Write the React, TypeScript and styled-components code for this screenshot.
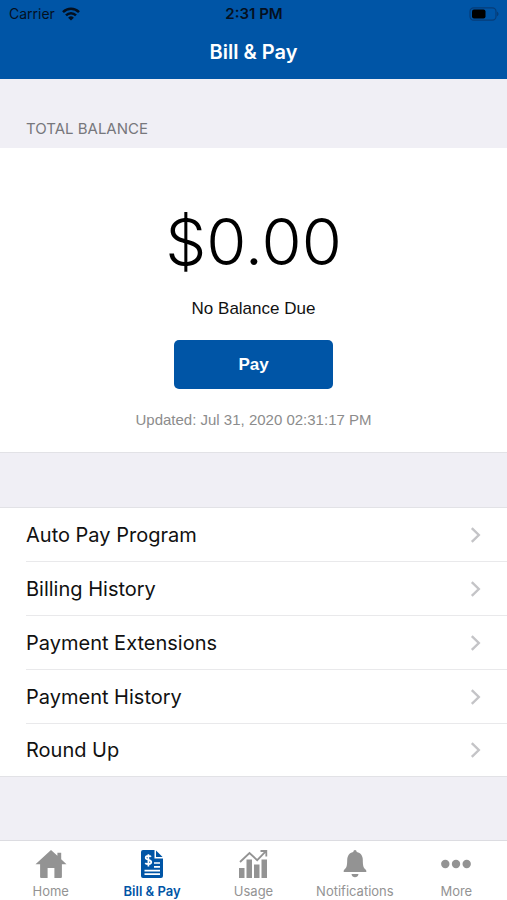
import React from "react";
import styled, { createGlobalStyle } from "styled-components";

const blue = "#0055a6";
const line = "#e2e2e6";
const sans = `Inter, "Liberation Sans", sans-serif`;
const helvetica = `"Liberation Sans", Arial, sans-serif`;

const GlobalStyle = createGlobalStyle`
  *, *::before, *::after { box-sizing: border-box; }
  body { margin: 0; font-family: ${sans}; color: #111; background: #f0eff5; }
  button { font: inherit; color: inherit; border: 0; padding: 0; cursor: pointer; }
  h1, h2, p, ul { margin: 0; padding: 0; font-weight: 400; }
  svg { display: block; }
`;

const Screen = styled.div`
  display: flex;
  flex-direction: column;
  min-height: 100vh;
`;

const Header = styled.header`
  background: ${blue};
  height: 79px;
`;

const StatusBar = styled.div`
  display: grid;
  grid-template-columns: 1fr auto 1fr;
  align-items: center;
  height: 27px;
  padding: 0 8px 0 9px;
  font-size: 14px;
  line-height: 16px;
  color: #04101f;
`;

const Carrier = styled.div`
  display: flex;
  align-items: center;
  gap: 7px;
`;

const Clock = styled.time`
  font-size: 15px;
  font-weight: 600;
`;

const BatterySlot = styled.div`
  display: flex;
  justify-content: flex-end;
`;

const Title = styled.h1`
  color: #fff;
  font-size: 20px;
  line-height: 50px;
  font-weight: 600;
  text-align: center;
`;

const Main = styled.main`
  flex: 1;
`;

const SectionTitle = styled.h2`
  padding: 40px 26px 9px;
  font-size: 15px;
  line-height: 20px;
  color: #77777c;
`;

const Balance = styled.section`
  display: flex;
  flex-direction: column;
  align-items: center;
  background: #fff;
  border-bottom: 1px solid ${line};
  padding: 52px 16px 22px;
`;

const Amount = styled.p`
  font-size: 65px;
  line-height: 84px;
  font-weight: 300;
  color: #000;
`;

const Due = styled.p`
  margin-top: 14px;
  font: 17px/22px ${helvetica};
  color: #111;
`;

const PayButton = styled.button`
  && {
    margin-top: 20px;
    width: 159px;
    height: 49px;
    border-radius: 5px;
    background: ${blue};
    color: #fff;
    font: 700 17px/24px ${helvetica};
  }
`;

const Updated = styled.p`
  margin-top: 21px;
  font: 15px/20px ${helvetica};
  color: #8c8c8c;
`;

const Menu = styled.ul`
  margin-top: 54px;
  list-style: none;
  background: #fff;
  border-top: 1px solid ${line};
  border-bottom: 1px solid ${line};
`;

const MenuItem = styled.li`
  padding-left: 26px;
`;

const MenuButton = styled.button<{ $last: boolean }>`
  && {
    display: flex;
    align-items: center;
    justify-content: space-between;
    width: 100%;
    height: ${(p) => (p.$last ? 52 : 54)}px;
    padding-right: 26px;
    background: none;
    border-bottom: ${(p) => (p.$last ? "0" : "1px solid #e9e9eb")};
    font-size: 20px;
    line-height: 26px;
  }
`;

const TabBar = styled.nav`
  display: grid;
  grid-template-columns: repeat(5, 1fr);
  height: 60px;
  background: #fff;
  border-top: 1px solid #dcdce1;
`;

const Tab = styled.button<{ $active: boolean }>`
  && {
    display: flex;
    flex-direction: column;
    align-items: center;
    gap: 3px;
    padding-top: 7px;
    background: none;
    color: ${(p) => (p.$active ? blue : "#939393")};
    font-size: 13px;
    line-height: 16px;
    font-weight: ${(p) => (p.$active ? 600 : 400)};
  }
`;

const WifiIcon = () => (
  <svg width="18" height="14" viewBox="0 0 18 14" fill="none" stroke="currentColor" strokeWidth="2.5" aria-hidden="true">
    <path d="M1 5.2C5.5.7 12.5.7 17 5.2" />
    <path d="M4 8.4c2.9-2.9 7.1-2.9 10 0" />
    <path d="M9 13.6 6.1 10.7a4.1 4.1 0 0 1 5.8 0z" fill="currentColor" stroke="none" />
  </svg>
);

const BatteryIcon = () => (
  <svg width="30" height="14" viewBox="0 0 30 14" aria-hidden="true">
    <rect x="1" y=".8" width="26" height="12.4" rx="3.6" fill="none" stroke="#063d78" strokeWidth="1.2" />
    <rect x="3" y="2.6" width="13.5" height="8.8" rx="2" fill="#000" />
    <path d="M28 4.8c2 .7 2 3.7 0 4.4z" fill="#063d78" />
  </svg>
);

const Chevron = () => (
  <svg width="11" height="16" viewBox="0 0 11 16" fill="none" stroke="#c4c4c7" strokeWidth="2.4" aria-hidden="true">
    <path d="m1.8 1.2 7 6.8-7 6.8" />
  </svg>
);

const HomeIcon = () => (
  <svg width="32" height="32" viewBox="0 0 32 32" fill="currentColor" aria-hidden="true">
    <path d="M16 2 .5 16.3h4.6V29q0 1 1 1h6.5V20h6.8v10h6.5q1 0 1-1V16.3h4.6l-5.3-5V4.8h-3.8v3z" />
  </svg>
);

const BillIcon = () => (
  <svg width="32" height="32" viewBox="0 0 32 32" aria-hidden="true">
    <path d="M7 2h11.5v8.5H27V28q0 2-2 2H7q-2 0-2-2V4q0-2 2-2z" fill="currentColor" />
    <path d="M20 2.5 26.6 9H20z" fill="currentColor" />
    <g fill="none" stroke="#fff" strokeWidth="1.7">
      <path d="M15 8.8c-1-1.2-5.3-1.5-5.3 1 0 2.6 5.6 1.5 5.6 4.3 0 2.7-4.7 2.5-6.1 1M12.4 6.2v12.2" />
      <path d="M18 15h6M18 18.8h6M8.5 22.6H24M8.5 26.2H24" />
    </g>
  </svg>
);

const UsageIcon = () => (
  <svg width="32" height="32" viewBox="0 0 32 32" fill="currentColor" aria-hidden="true">
    <path d="M2 20h5.5v10H2zM9.5 11.5H15V30H9.5zM17 16.5h5.5V30H17zM24.5 11.5H30V30h-5.5z" />
    <path d="m3 14 9.5-9 7.7 7.2 8-8.3M23.5 3h5.8v5.6" fill="none" stroke="currentColor" strokeWidth="1.8" />
  </svg>
);

const BellIcon = () => (
  <svg width="32" height="32" viewBox="0 0 32 32" fill="currentColor" aria-hidden="true">
    <path d="M16 2q1.5 0 1.8 2c4 .8 6 4 6 8 0 6 .7 8 3 9.8q.8.7.5 2.2H4.7q-.3-1.5.5-2.2c2.3-1.8 3-3.8 3-9.8 0-4 2-7.2 6-8Q14.5 2 16 2zM12.500 26h7c-.5 4.3-6.5 4.3-7 0z" />
  </svg>
);

const MoreIcon = () => (
  <svg width="32" height="32" viewBox="0 0 32 32" fill="currentColor" aria-hidden="true">
    <circle cx="5.3" cy="16" r="4.2" />
    <circle cx="16" cy="16" r="4.2" />
    <circle cx="26.7" cy="16" r="4.2" />
  </svg>
);

const menuItems = ["Auto Pay Program", "Billing History", "Payment Extensions", "Payment History", "Round Up"];

const tabs = [
  { label: "Home", Icon: HomeIcon },
  { label: "Bill & Pay", Icon: BillIcon },
  { label: "Usage", Icon: UsageIcon },
  { label: "Notifications", Icon: BellIcon },
  { label: "More", Icon: MoreIcon },
];

export default function App() {
  return (
    <>
      <GlobalStyle />
      <Screen>
        <Header>
          <StatusBar>
            <Carrier>
              Carrier
              <WifiIcon />
            </Carrier>
            <Clock>2:31 PM</Clock>
            <BatterySlot>
              <BatteryIcon />
            </BatterySlot>
          </StatusBar>
          <Title>Bill &amp; Pay</Title>
        </Header>
        <Main>
          <SectionTitle>TOTAL BALANCE</SectionTitle>
          <Balance>
            <Amount>$0.00</Amount>
            <Due>No Balance Due</Due>
            <PayButton type="button">Pay</PayButton>
            <Updated>Updated: Jul 31, 2020 02:31:17 PM</Updated>
          </Balance>
          <Menu>
            {menuItems.map((label, i) => (
              <MenuItem key={label}>
                <MenuButton type="button" $last={i === menuItems.length - 1}>
                  {label}
                  <Chevron />
                </MenuButton>
              </MenuItem>
            ))}
          </Menu>
        </Main>
        <TabBar aria-label="Main">
          {tabs.map(({ label, Icon }) => {
            const active = label === "Bill & Pay";
            return (
              <Tab key={label} type="button" $active={active} aria-current={active ? "page" : undefined}>
                <Icon />
                {label}
              </Tab>
            );
          })}
        </TabBar>
      </Screen>
    </>
  );
}
